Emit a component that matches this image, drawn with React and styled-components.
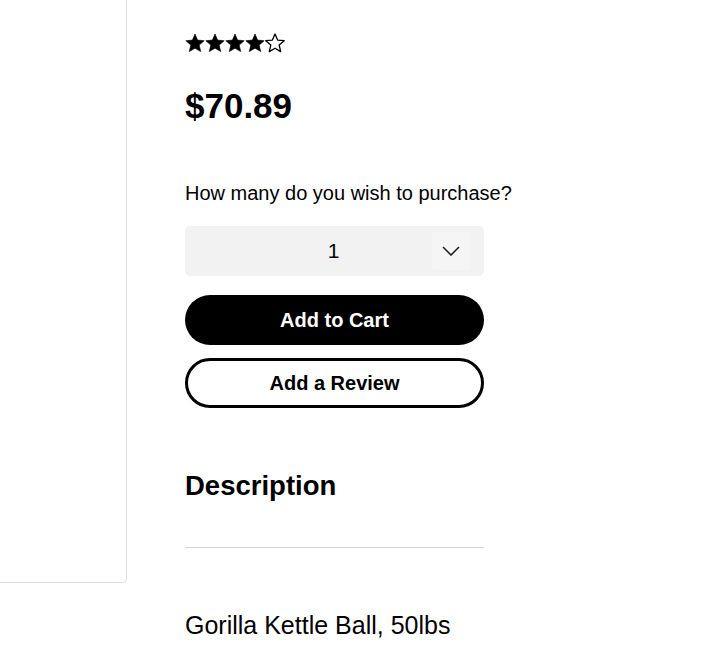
import styled, { createGlobalStyle } from "styled-components";

const GlobalStyle = createGlobalStyle`
  body {
    margin: 0;
    background: #fff;
    font-family: "Liberation Sans", Arial, sans-serif;
    color: #000;
  }
`;

const Page = styled.div`
  display: flex;
  gap: 58px;
  height: 653px;
  overflow: hidden;
`;

const ImageCard = styled.div`
  width: 126px;
  height: 582px;
  flex-shrink: 0;
  border: 1px solid #dedede;
  border-left: none;
  border-top: none;
  border-bottom-right-radius: 5px;
`;

const Details = styled.div`
  width: 299px;
  display: flex;
  flex-direction: column;
  padding-top: 33px;
`;

const Stars = styled.div`
  display: flex;
  height: 20px;
`;

const Price = styled.h2`
  margin: 33px 0 0;
  font-size: 35px;
  font-weight: 700;
  line-height: 40px;
`;

const Label = styled.p`
  margin: 55px 0 0;
  font-size: 20px;
  line-height: 24px;
  white-space: nowrap;
`;

const Select = styled.div`
  margin-top: 21px;
  height: 50px;
  background: #f2f2f2;
  border-radius: 5px;
  display: flex;
  align-items: center;
  padding-right: 14px;
`;

const SelectValue = styled.span`
  flex: 1;
  text-align: center;
  font-size: 21px;
  padding-left: 50px;
`;

const ChevronBox = styled.span`
  width: 38px;
  height: 38px;
  border-radius: 3px;
  background: #f5f5f5;
  display: flex;
  align-items: center;
  justify-content: center;
`;

const Button = styled.button`
  margin-top: ${(p) => p.$top}px;
  height: 50px;
  border-radius: 25px;
  font-family: "Liberation Sans", Arial, sans-serif;
  font-size: 20px;
  font-weight: 700;
  cursor: pointer;
  background: ${(p) => (p.$outline ? "#fff" : "#000")};
  color: ${(p) => (p.$outline ? "#000" : "#fff")};
  border: ${(p) => (p.$outline ? "3px solid #000" : "none")};
`;

const Heading = styled.h3`
  margin: 62px 0 0;
  font-size: 27.5px;
  font-weight: 700;
  line-height: 32px;
`;

const Rule = styled.hr`
  margin: 45px 0 0;
  border: none;
  border-top: 1px solid #d4d4d4;
`;

const Text = styled.p`
  margin: 63px 0 0;
  font-size: 25px;
  line-height: 28px;
`;

const STAR = "M10 1l2.6 6.1 6.6.6-5 4.4 1.5 6.5L10 15.2 4.3 18.6l1.5-6.5-5-4.4 6.6-.6z";

function Star({ filled }) {
  return (
    <svg width="20" height="20" viewBox="0 0 20 20">
      <path
        d={STAR}
        fill={filled ? "#000" : "#fff"}
        stroke="#000"
        strokeWidth={filled ? 0.6 : 1.3}
        strokeLinejoin="round"
      />
    </svg>
  );
}

export default function App() {
  const rating = 4;
  return (
    <>
      <GlobalStyle />
      <Page>
        <ImageCard />
        <Details>
          <Stars>
            {[0, 1, 2, 3, 4].map((i) => (
              <Star key={i} filled={i < rating} />
            ))}
          </Stars>
          <Price>$70.89</Price>
          <Label>How many do you wish to purchase?</Label>
          <Select>
            <SelectValue>1</SelectValue>
            <ChevronBox>
              <svg width="18" height="10" viewBox="0 0 18 10" fill="none">
                <path d="M1 1l8 8 8-8" stroke="#222" strokeWidth="1.6" />
              </svg>
            </ChevronBox>
          </Select>
          <Button $top={19}>Add to Cart</Button>
          <Button $top={13} $outline>
            Add a Review
          </Button>
          <Heading>Description</Heading>
          <Rule />
          <Text>Gorilla Kettle Ball, 50lbs</Text>
        </Details>
      </Page>
    </>
  );
}
